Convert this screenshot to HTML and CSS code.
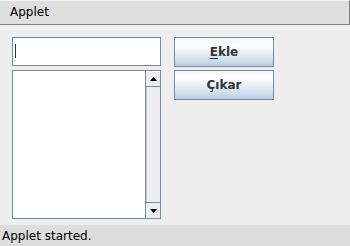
FILE: index.html
```html
<!DOCTYPE html>
<html>
<head>
<meta charset="utf-8">
<link rel="stylesheet" href="styles.css">
</head>
<body>
<div class="frame">
  <div class="titlebar">Applet</div>
  <div class="content">
    <div class="left">
      <div class="textfield"><span class="caret"></span></div>
      <div class="list">
        <div class="list-body"></div>
        <div class="scrollbar">
          <div class="sb-btn sb-up"><svg width="7" height="4" viewBox="0 0 7 4"><path d="M0 4 L3.5 0 L7 4 Z" fill="#000"/></svg></div>
          <div class="sb-track"></div>
          <div class="sb-btn sb-down"><svg width="7" height="4" viewBox="0 0 7 4"><path d="M0 0 L3.5 4 L7 0 Z" fill="#000"/></svg></div>
        </div>
      </div>
    </div>
    <div class="right">
      <button class="btn"><u>E</u>kle</button>
      <button class="btn">Çıkar</button>
    </div>
  </div>
  <div class="status">Applet started.</div>
</div>
</body>
</html>
```

FILE: styles.css
```css
html, body {
  margin: 0;
  padding: 0;
}
body {
  width: 350px;
  height: 246px;
  overflow: hidden;
  background: #eeeeee;
  font-family: "DejaVu Sans", sans-serif;
  font-size: 12px;
  color: #000;
}
.frame {
  display: flex;
  flex-direction: column;
  height: 246px;
}
.titlebar {
  height: 24px;
  box-sizing: border-box;
  background: #dedede;
  border-top: 1px solid #f4f4f4;
  border-bottom: 1px solid #808080;
  border-right: 1px solid #808080;
  padding-left: 10px;
  line-height: 23px;
  height: 25px;
}
.content {
  flex: 1;
  display: flex;
  padding: 12px 0 0 12px;
  box-sizing: border-box;
}
.left {
  width: 149px;
  display: flex;
  flex-direction: column;
  gap: 4px;
}
.textfield {
  height: 29px;
  box-sizing: border-box;
  border: 1px solid #7a8a99;
  background: #fff;
  position: relative;
}
.caret {
  position: absolute;
  left: 2px;
  top: 6px;
  width: 1px;
  height: 14px;
  background: #333;
}
.list {
  height: 149px;
  box-sizing: border-box;
  border: 1px solid #7a8a99;
  background: #fff;
  display: flex;
}
.list-body {
  flex: 1;
}
.scrollbar {
  width: 15px;
  display: flex;
  flex-direction: column;
  border-left: 1px solid #7a8a99;
  box-sizing: border-box;
  background: #eeeeee;
}
.sb-btn {
  height: 16px;
  box-sizing: border-box;
  background: #eeeeee;
  border-top: 1px solid #fff;
  display: flex;
  align-items: center;
  justify-content: center;
}
.sb-up {
  border-bottom: 1px solid #7a8a99;
}
.sb-down {
  border-top: 1px solid #7a8a99;
  height: 16px;
}
.sb-track {
  flex: 1;
  border-left: 1px solid #b8cfe5;
}
.right {
  margin-left: 13px;
  display: flex;
  flex-direction: column;
  gap: 3px;
}
.btn {
  width: 100px;
  height: 30px;
  box-sizing: border-box;
  border: 1px solid #7a8a99;
  background: linear-gradient(to bottom, #f3f6fa 0%, #ffffff 25%, #dde7f2 65%, #b8cfe5 100%);
  font-family: "DejaVu Sans", sans-serif;
  font-weight: bold;
  font-size: 12px;
  color: #333333;
  padding: 0;
  margin: 0;
}
.btn u {
  text-decoration-thickness: 1px;
  text-underline-offset: 2px;
}
.status {
  height: 21px;
  background: #dddddd;
  padding-left: 2px;
  line-height: 22px;
}
```
